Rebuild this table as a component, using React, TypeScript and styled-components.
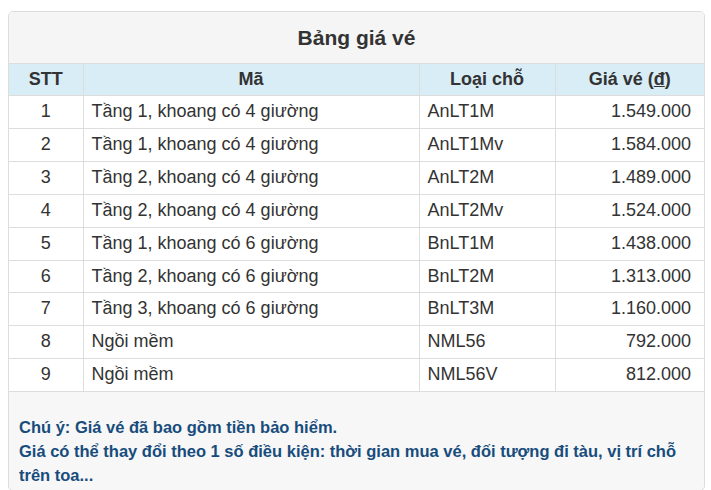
import React from "react";
import styled, { createGlobalStyle } from "styled-components";

const GlobalStyle = createGlobalStyle`
  html, body {
    margin: 0;
    background: #fff;
  }
  body {
    font-family: "Liberation Sans", Arial, sans-serif;
    color: #333;
  }
`;

const Panel = styled.div`
  margin: 11px 0 0 8px;
  width: 697px;
  box-sizing: border-box;
  border: 1px solid #ddd;
  border-radius: 5px;
  background: #f7f7f7;
  overflow: hidden;
`;

const Heading = styled.div`
  height: 51px;
  background: #f5f5f5;
  border-bottom: 1px solid #ddd;
  display: flex;
  align-items: center;
  justify-content: center;
  font-size: 21px;
  font-weight: bold;
  color: #333;
`;

const Table = styled.table`
  width: 100%;
  border-collapse: collapse;
  background: #fff;
  font-size: 18px;
`;

const Th = styled.th`
  background: #d9edf7;
  border: 1px solid #ddd;
  border-top: 0;
  padding: 5px 8px;
  height: 21px;
  line-height: 21px;
  font-weight: bold;
  text-align: center;
  &:first-child { border-left: 0; }
  &:last-child { border-right: 0; }
`;

const Td = styled.td<{ $align?: "left" | "center" | "right" }>`
  border: 1px solid #ddd;
  padding: 5px 8px;
  line-height: 21.9px;
  text-align: ${(p) => p.$align || "left"};
  &:first-child { border-left: 0; }
  &:last-child { border-right: 0; padding-right: 13px; }
`;

const Note = styled.div`
  padding: 23px 10px 3px;
  font-size: 16.5px;
  font-weight: bold;
  line-height: 24px;
  color: #174c7c;
`;

const rows = [
  ["Tầng 1, khoang có 4 giường", "AnLT1M", "1.549.000"],
  ["Tầng 1, khoang có 4 giường", "AnLT1Mv", "1.584.000"],
  ["Tầng 2, khoang có 4 giường", "AnLT2M", "1.489.000"],
  ["Tầng 2, khoang có 4 giường", "AnLT2Mv", "1.524.000"],
  ["Tầng 1, khoang có 6 giường", "BnLT1M", "1.438.000"],
  ["Tầng 2, khoang có 6 giường", "BnLT2M", "1.313.000"],
  ["Tầng 3, khoang có 6 giường", "BnLT3M", "1.160.000"],
  ["Ngồi mềm", "NML56", "792.000"],
  ["Ngồi mềm", "NML56V", "812.000"],
];

const App: React.FC = () => {
  return (
    <>
      <GlobalStyle />
      <Panel>
        <Heading>Bảng giá vé</Heading>
        <Table>
          <colgroup>
            <col style={{ width: 74 }} />
            <col style={{ width: 336 }} />
            <col style={{ width: 136 }} />
            <col />
          </colgroup>
          <thead>
            <tr>
              <Th>STT</Th>
              <Th>Mã</Th>
              <Th>Loại chỗ</Th>
              <Th>
                Giá vé (<u>đ</u>)
              </Th>
            </tr>
          </thead>
          <tbody>
            {rows.map((r, i) => (
              <tr key={i}>
                <Td $align="center">{i + 1}</Td>
                <Td>{r[0]}</Td>
                <Td>{r[1]}</Td>
                <Td $align="right">{r[2]}</Td>
              </tr>
            ))}
          </tbody>
        </Table>
        <Note>
          Chú ý: Giá vé đã bao gồm tiền bảo hiểm.
          <br />
          Giá có thể thay đổi theo 1 số điều kiện: thời gian mua vé, đối tượng đi tàu, vị trí chỗ trên toa...
        </Note>
      </Panel>
    </>
  );
};

export default App;
